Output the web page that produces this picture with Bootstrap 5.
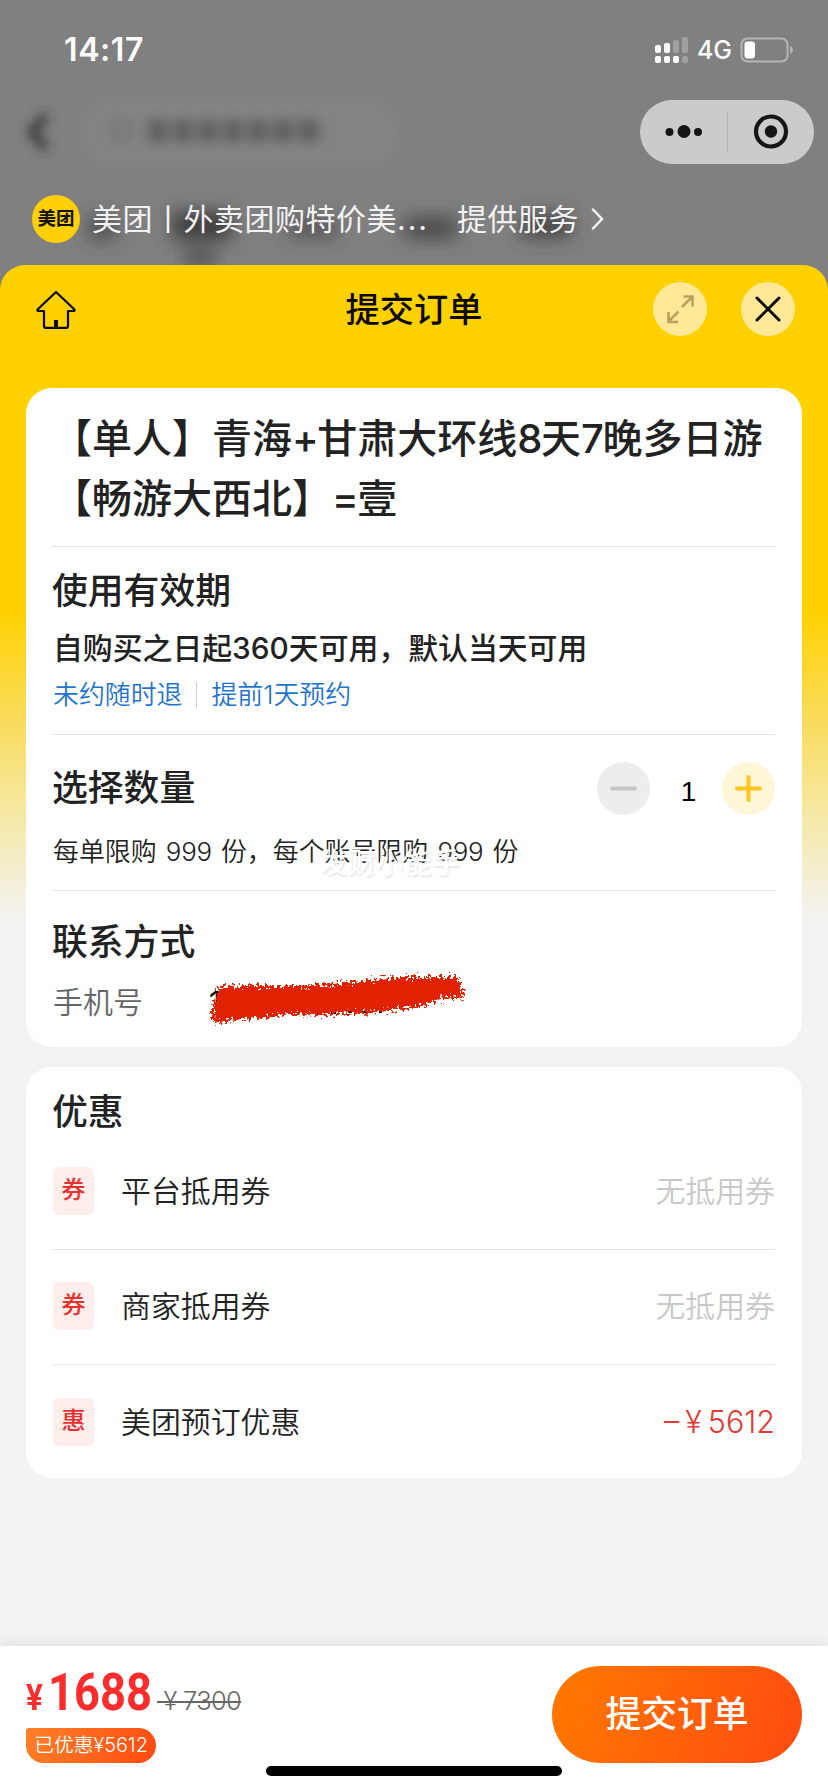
<!DOCTYPE html>
<html lang="zh-CN">
<head>
<meta charset="utf-8">
<meta name="viewport" content="width=device-width, initial-scale=1">
<title>提交订单</title>
<link href="https://cdn.jsdelivr.net/npm/bootstrap@5.3.0/dist/css/bootstrap.min.css" rel="stylesheet">
<style>
  body { font-family: Inter, "Noto Sans CJK SC", sans-serif; background: #808080; color: #222; width: 828px; height: 1792px; overflow: hidden; letter-spacing: 0; }
  svg { display: block; flex: none; }
  .screen { height: 1792px; position: relative; }
  .backdrop { position: absolute; left: 0; top: 0; }
  .top-area { height: 265px; position: relative; color: #fff; }
  .status { height: 100px; padding: 0 34px 0 64px; }
  .clock { font-size: 32px; font-weight: 600; line-height: 40px; letter-spacing: .6px; }
  .net { font-size: 25px; font-weight: 500; line-height: 30px; }
  .capsule { width: 174px; height: 64px; margin-left: 640px; border-radius: 32px; background: #cbcbcb; }
  .service { height: 48px; margin: 31px 0 0 32px; font-size: 30px; line-height: 48px; color: #f2f2f2; letter-spacing: .5px; }
  .service-name { margin-left: -4px; }
  .dots { letter-spacing: 2px; }
  .logo-dot { width: 48px; height: 48px; background: #ffcf08; color: #111; font-size: 18.5px; font-weight: 700; letter-spacing: 0; line-height: 47px; }
  .sheet { height: 1527px; border-radius: 25px 25px 0 0; background: linear-gradient(#ffd100 0, #ffd100 345px, #f9dc5c 455px, #f5e9a9 555px, #f3f3f3 655px); position: relative; }
  .sheet-head { height: 123px; padding: 17px 33px 0 36px; }
  .sheet-title { font-size: 34.2px; font-weight: 500; line-height: 54px; color: #0a0800; position: absolute; left: 0; right: 0; top: 18px; }
  .round-btn { width: 54px; height: 54px; background: #ffe998; }
  .panel { background: #fff; border-radius: 26px; margin: 0 26px; padding: 0 27px; }
  .rule { border-bottom: 1px solid #e3e3e3; }
  .blk-title { height: 159px; padding-top: 21px; font-size: 40px; line-height: 60px; font-weight: 500; margin-left: -1px; padding-left: 0; }
  .blk-title .num { letter-spacing: -1.4px; }
  .h-sec { font-size: 35.8px; line-height: 50px; font-weight: 500; margin: 0; position: relative; left: -1px; }
  .blk-valid { height: 188px; padding-top: 19px; }
  .valid { font-size: 29.85px; line-height: 40px; font-weight: 500; margin-top: 12px; }
  .tags { font-size: 25.9px; line-height: 34px; margin-top: 10px; color: #1f74cf; font-weight: 350; }
  .vbar { width: 1px; height: 26px; background: #ccc; margin: 0 14px; }
  .blk-qty { height: 156px; padding-top: 26px; position: relative; }
  .qty-row { height: 54px; }
  .minus, .plus { width: 53px; height: 53px; }
  .minus { background: #ededed; } .plus { background: #fff6d8; }
  .qty { font: 28px/30px "Liberation Sans", sans-serif; color: #000; width: 72px; padding: 8px 0 0 5px; }
  .limit { font-size: 25.9px; line-height: 34px; margin-top: 20px; font-weight: 350; }
  .limit .num { letter-spacing: -.3px; margin: 0 2px; }
  .ghost { position: absolute; left: 267px; top: 106px; font-size: 28px; line-height: 44px; color: #fff; font-weight: 500; text-shadow: 1px 2px 2px rgba(0,0,0,.1); }
  .blk-phone { height: 156px; padding-top: 26px; position: relative; }
  .phone { font-size: 30px; line-height: 40px; margin-top: 15px; color: #666; font-weight: 350; }
  .phone-no { color: #000; font-weight: 400; margin-left: 66px; }
  .scribble { position: absolute; left: 147px; top: 74px; }
  .deals { margin-top: 20px; height: 411px; padding-top: 20px; }
  .deal { height: 115px; font-size: 29.9px; font-weight: 350; line-height: 42px; padding-bottom: 2px; }
  .deal:last-child { padding-bottom: 1px; }
  .deal-tag { width: 41px; height: 48px; border-radius: 6px; background: #fdeeec; color: #e8312f; font-size: 24px; font-weight: 500; line-height: 46px; margin-right: 27px; }
  .none { color: #c8c8c8; }
  .minus-amt { color: #e53935; font-size: 30.5px; word-spacing: -2.5px; }
  .pay-bar { position: absolute; left: 0; right: 0; bottom: 0; height: 146px; background: #fff; padding: 20px 26px 0; box-shadow: 0 -3px 12px rgba(0,0,0,.08); }
  .price { font-family: Roboto, sans-serif; font-weight: 700; color: #fb2c2c; font-size: 52px; line-height: 54px; width: 128px; transform: scaleX(.87); transform-origin: left; letter-spacing: 0; }
  .price small { font-size: 36px; font-weight: 700; margin-right: 6px; }
  .was { font-size: 25.5px; line-height: 54px; color: #666; font-weight: 300; text-decoration: line-through; text-decoration-thickness: 2px; margin-left: 3px; letter-spacing: -.7px; }
  .saved { width: 130px; height: 35px; margin-top: 8px; border-radius: 3px 18px 18px 18px; background: linear-gradient(110deg, #ff8126, #ff4a12); color: #fff; font-size: 19.8px; line-height: 34px; font-weight: 350; }
  .pay-btn { width: 250px; height: 97px; border: 0; border-radius: 49px; background: linear-gradient(110deg, #ff7a00, #ff4a12); color: #fff; font-size: 35.8px; font-weight: 500; line-height: 97px; padding: 0; }
  .home-bar { position: absolute; left: 266px; top: 120px; width: 296px; height: 10px; border-radius: 5px; background: #000; }
</style>
</head>
<body>
<div class="screen">
  <!-- dimmed, blurred page behind the sheet -->
  <svg class="backdrop" width="828" height="290" aria-hidden="true">
    <defs>
      <filter id="b6" x="-20%" y="-50%" width="140%" height="200%"><feGaussianBlur stdDeviation="6"/></filter>
      <filter id="b9" x="-50%" y="-50%" width="200%" height="200%"><feGaussianBlur stdDeviation="9"/></filter>
    </defs>
    <rect x="82" y="98" width="316" height="70" rx="35" fill="#848484" filter="url(#b6)"/>
    <g filter="url(#b6)">
      <path d="M46 115 L32 132 L46 149" fill="none" stroke="#333" stroke-width="8"/>
      <circle cx="122" cy="131" r="10" fill="none" stroke="#6c6c6c" stroke-width="4"/>
      <path d="M148 131h176" stroke="#606060" stroke-width="23" stroke-dasharray="20 5"/>
    </g>
    <g filter="url(#b9)" fill="#3c3c3c">
      <rect x="88" y="216" width="28" height="24" opacity=".7"/>
      <rect x="172" y="212" width="60" height="28"/>
      <rect x="184" y="251" width="32" height="14" opacity=".8"/>
      <rect x="288" y="218" width="50" height="20" opacity=".6"/>
      <rect x="404" y="216" width="54" height="24" opacity=".75"/>
      <rect x="520" y="214" width="52" height="24" opacity=".8"/>
    </g>
  </svg>

  <header class="top-area">
    <div class="status d-flex align-items-center justify-content-between">
      <div class="clock">14:17</div>
      <div class="d-flex align-items-center">
        <svg width="34" height="28" viewBox="0 0 34 28" fill="#fff">
          <rect y="9" width="6" height="8" rx="2"/><rect x="9" y="7" width="6" height="10" rx="2"/>
          <rect x="18" y="4" width="6" height="13" rx="2" opacity=".25"/><rect x="27" y="1" width="6" height="16" rx="2" opacity=".25"/>
          <rect y="20" width="6" height="7" rx="2"/><rect x="9" y="20" width="6" height="7" rx="2"/><rect x="18" y="20" width="6" height="7" rx="2"/><rect x="27" y="20" width="6" height="7" rx="2" opacity=".25"/>
        </svg>
        <span class="net ms-2">4G</span>
        <svg class="ms-2" width="54" height="26" viewBox="0 0 54 26">
          <rect x="1.5" y="1.5" width="46" height="23" rx="6" fill="none" stroke="#b5b5b5" stroke-width="2"/>
          <rect x="4.500" y="4.500" width="10.500" height="17" rx="3" fill="#fff"/>
          <path d="M50 9v8q3-1.500 3-4t-3-4z" fill="#b5b5b5"/>
        </svg>
      </div>
    </div>
    <div class="capsule">
      <svg width="174" height="64" viewBox="0 0 174 64" fill="#151515">
        <circle cx="29.500" cy="32" r="4"/><circle cx="44" cy="31.500" r="6.500"/><circle cx="58" cy="32" r="4"/>
        <path d="M87.500 12v40" stroke="#b2b2b2"/>
        <circle cx="131" cy="31.500" r="15" fill="none" stroke="#151515" stroke-width="4.200"/><circle cx="131" cy="31.500" r="6.200"/>
      </svg>
    </div>
    <div class="service d-flex align-items-center text-nowrap">
      <div class="logo-dot rounded-circle text-center me-3">美团</div>
      <span class="service-name">美团丨外卖团购特价美<span class="dots">...</span></span>
      <span class="ms-4 ps-1">提供服务</span>
      <svg class="ms-2 ps-1" width="17" height="22" viewBox="0 0 12 22" fill="none" stroke="#f2f2f2" stroke-width="2.500" stroke-linecap="round"><path d="M1.500 1.500 10.500 11l-9 9.500"/></svg>
    </div>
  </header>

  <main class="sheet">
    <div class="sheet-head d-flex">
      <svg class="mt-2" width="40" height="40" viewBox="0 0 40 40" fill="none" stroke="#0a0800" stroke-width="2.200" stroke-linejoin="round">
        <path d="M20 2 38.500 19.500q.5 1.500-1 1.500H32v15q0 1.800-1.800 1.800H9.800Q8 37.800 8 36V21H2.500q-1.500 0-1-1.500z"/><path d="M20 30v7" stroke-width="4"/>
      </svg>
      <div class="sheet-title text-center">提交订单</div>
      <div class="d-flex ms-auto position-relative" style="gap:34px">
        <div class="round-btn rounded-circle"><svg width="54" height="54" viewBox="0 0 54 54" fill="none" stroke="#b9a35c" stroke-width="2.600"><path d="M29 25 39.500 14.500M30.500 14.500h9v10M25.500 29.500 15 40M15.500 30v10h9.500"/></svg></div>
        <div class="round-btn rounded-circle"><svg width="54" height="54" viewBox="0 0 54 54" fill="none" stroke="#0a0800" stroke-width="3" stroke-linecap="round"><path d="M16 16 38 38M38 16 16 38"/></svg></div>
      </div>
    </div>

    <section class="panel">
      <div class="blk-title rule text-nowrap">【单人】青海<span class="num">+</span>甘肃大环线<span class="num">8</span>天<span class="num">7</span>晚多日游<br>【畅游大西北】<span class="num">=</span>壹</div>
      <div class="blk-valid rule text-nowrap">
        <h2 class="h-sec">使用有效期</h2>
        <div class="valid">自购买之日起360天可用，默认当天可用</div>
        <div class="tags d-flex align-items-center"><span>未约随时退</span><i class="vbar"></i><span>提前1天预约</span></div>
      </div>
      <div class="blk-qty rule text-nowrap">
        <div class="qty-row d-flex align-items-center">
          <h2 class="h-sec me-auto">选择数量</h2>
          <div class="minus rounded-circle"><svg width="53" height="53" viewBox="0 0 53 53"><path d="M15 26.500h23" stroke="#c6c6c6" stroke-width="4" stroke-linecap="round"/></svg></div>
          <div class="qty text-center">1</div>
          <div class="plus rounded-circle"><svg width="53" height="53" viewBox="0 0 53 53"><path d="M15 26.500h23M26.500 15v23" stroke="#ffc61f" stroke-width="4.200" stroke-linecap="round"/></svg></div>
        </div>
        <div class="limit">每单限购 <span class="num">999</span> 份，每个账号限购 <span class="num">999</span> 份</div>
        <div class="ghost">发财小能手</div>
      </div>
      <div class="blk-phone text-nowrap">
        <h2 class="h-sec">联系方式</h2>
        <div class="phone"><span>手机号</span><span class="phone-no">1</span></div>
        <!-- marker stroke over the phone number -->
        <svg class="scribble" width="280" height="70" viewBox="200 965 280 70" aria-hidden="true">
          <filter id="rough" x="-5%" y="-20%" width="110%" height="140%"><feTurbulence type="fractalNoise" baseFrequency=".35" numOctaves="3" seed="4"/><feDisplacementMap in="SourceGraphic" scale="16" xChannelSelector="R" yChannelSelector="G"/><feGaussianBlur stdDeviation=".4"/></filter>
          <path d="M245 1012h8M316 1013h6M331 1013h5M349 1012h3M363 1012h3M379 1012h3" stroke="#000" stroke-width="2"/>
          <path filter="url(#rough)" fill="#e02105" d="M213 1005 219 987 240 986 300 986 345 983 400 977 458 977 465 998 445 997 424 1006 378 1012 320 1015 290 1014 265 1018 250 1018 212 1023z"/>
        </svg>
      </div>
    </section>

    <section class="panel deals text-nowrap">
      <h2 class="h-sec" style="height:48px">优惠</h2>
      <div class="deal rule d-flex align-items-center"><span class="deal-tag text-center">券</span><span>平台抵用券</span><span class="none ms-auto">无抵用券</span></div>
      <div class="deal rule d-flex align-items-center"><span class="deal-tag text-center">券</span><span>商家抵用券</span><span class="none ms-auto">无抵用券</span></div>
      <div class="deal d-flex align-items-center"><span class="deal-tag text-center">惠</span><span>美团预订优惠</span><span class="minus-amt ms-auto">– ¥ 5612</span></div>
    </section>

    <footer class="pay-bar d-flex justify-content-between text-nowrap">
      <div>
        <div class="d-flex align-items-baseline" style="height:54px"><span class="price"><small>¥</small>1688</span><span class="was">&nbsp;¥ 7300</span></div>
        <div class="saved text-center">已优惠¥5612</div>
      </div>
      <button class="pay-btn" type="button">提交订单</button>
      <div class="home-bar"></div>
    </footer>
  </main>
</div>
<script src="https://cdn.jsdelivr.net/npm/bootstrap@5.3.0/dist/js/bootstrap.bundle.min.js"></script>
</body>
</html>
